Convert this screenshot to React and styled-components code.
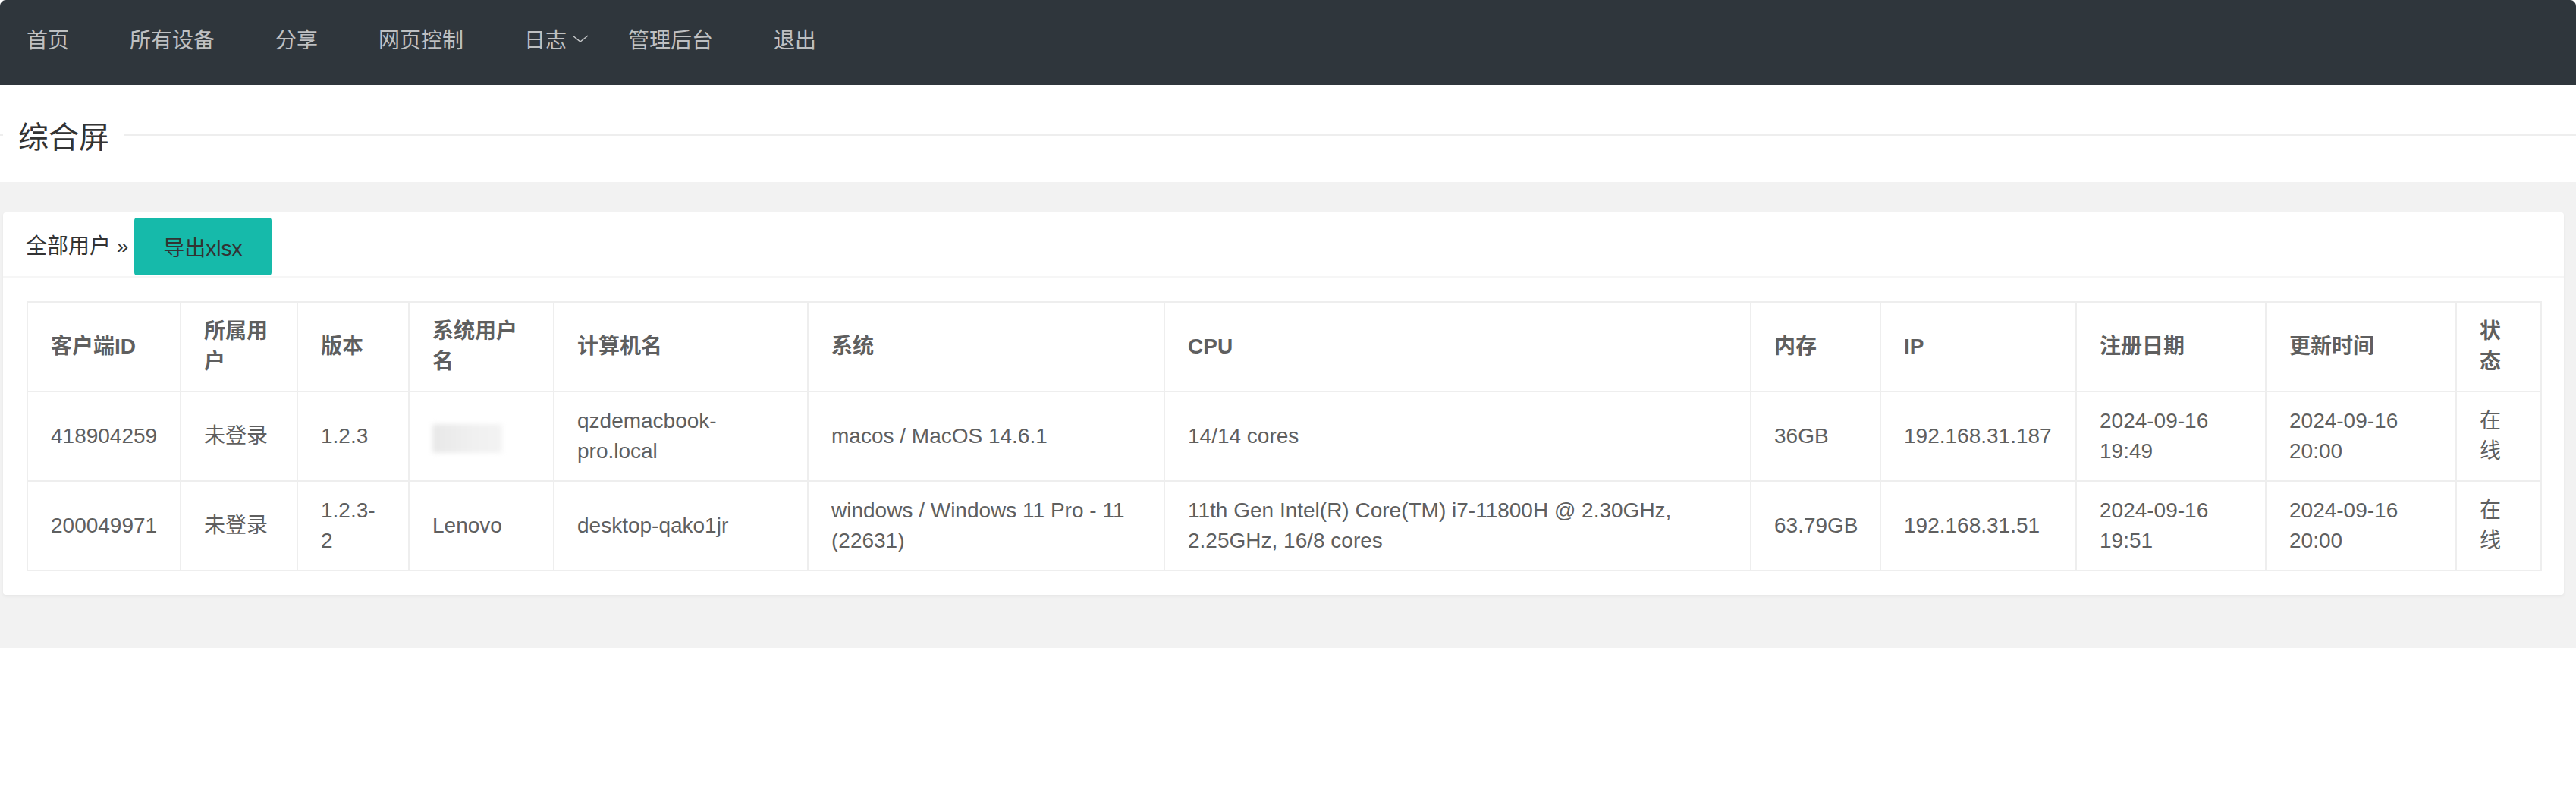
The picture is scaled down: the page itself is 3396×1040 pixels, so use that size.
import React from "react";
import styled, { createGlobalStyle } from "styled-components";

const GlobalStyle = createGlobalStyle`
  html, body { margin: 0; padding: 0; background: #fff; }
  body { font-family: "Liberation Sans", "Noto Sans CJK SC", sans-serif; }
  * { box-sizing: border-box; }
`;

const Nav = styled.nav`
  height: 112px;
  background: #2f363c;
  border-radius: 8px 8px 0 0;
  display: flex;
  align-items: flex-start;
`;

const NavItem = styled.a`
  display: inline-flex;
  align-items: center;
  height: 101px;
  padding: 0 ${(p) => (p.$dropdown ? "11px" : "40px")} 0 40px;
  font-family: "Noto Sans CJK SC", sans-serif;
  font-size: 28px;
  color: rgba(255, 255, 255, 0.7);
  text-decoration: none;
  cursor: pointer;
  &:first-child {
    padding-left: 35px;
  }
`;

const Chevron = styled.svg`
  width: 24px;
  height: 12px;
  margin-left: 6px;
  flex: none;
`;

const TitleSection = styled.section`
  height: 128px;
  padding-top: 38px;
  background: #fff;
`;

const TitleRow = styled.div`
  display: flex;
  align-items: center;
  height: 56px;
  &::before {
    content: "";
    width: 4px;
    height: 2px;
    background: #eee;
  }
  &::after {
    content: "";
    flex: 1;
    height: 2px;
    background: #eee;
  }
`;

const Title = styled.h2`
  margin: 0;
  padding: 0 20px;
  font-family: "Noto Sans CJK SC", sans-serif;
  font-size: 40px;
  font-weight: 400;
  line-height: 56px;
  color: #333;
`;

const Main = styled.main`
  background: #f2f2f2;
  padding: 40px 16px 70px 4px;
`;

const Card = styled.div`
  background: #fff;
  border-radius: 4px;
  box-shadow: 0 2px 4px rgba(0, 0, 0, 0.05);
`;

const CardHeader = styled.div`
  height: 86px;
  padding: 0 30px;
  border-bottom: 2px solid #f6f6f6;
  display: flex;
  align-items: center;
  font-size: 28px;
  color: #333;
`;

const Crumb = styled.span`
  white-space: pre;
`;

const ExportButton = styled.button`
  height: 76px;
  margin: 6px 0 0 8px;
  padding: 0 38px;
  border: none;
  border-radius: 4px;
  background: #16baaa;
  color: #333;
  font-family: "Liberation Sans", "Noto Sans CJK SC", sans-serif;
  font-size: 28px;
  cursor: pointer;
`;

const CardBody = styled.div`
  padding: 31px;
`;

const Table = styled.table`
  width: 100%;
  border-collapse: collapse;
  table-layout: fixed;
  border: 2px solid #eee;
`;

const Col = styled.col`
  width: ${(p) => p.$w}px;
`;

const Th = styled.th`
  padding: 18px 30px;
  border: 2px solid #eee;
  font-size: 28px;
  line-height: 40px;
  font-weight: 700;
  color: #5f5f5f;
  text-align: left;
`;

const Td = styled.td`
  padding: 18px 30px;
  border: 2px solid #eee;
  font-size: 28px;
  line-height: 40px;
  color: #5f5f5f;
  text-align: left;
`;

const BlurBox = styled.span`
  display: inline-block;
  width: 92px;
  height: 38px;
  vertical-align: middle;
  margin-top: 6px;
  background: linear-gradient(90deg, #e8e8e8, #f0f0f0 60%, #f3f3f3);
  filter: blur(3px);
  border-radius: 3px;
`;

const navItems = ["首页", "所有设备", "分享", "网页控制", "日志", "管理后台", "退出"];

const widths = [202, 154, 147, 191, 335, 470, 773, 171, 258, 250, 251, 112];

const headers = [
  "客户端ID",
  "所属用户",
  "版本",
  "系统用户名",
  "计算机名",
  "系统",
  "CPU",
  "内存",
  "IP",
  "注册日期",
  "更新时间",
  "状态",
];

const rows = [
  [
    "418904259",
    "未登录",
    "1.2.3",
    null,
    "qzdemacbook-pro.local",
    "macos / MacOS 14.6.1",
    "14/14 cores",
    "36GB",
    "192.168.31.187",
    "2024-09-16 19:49",
    "2024-09-16 20:00",
    "在线",
  ],
  [
    "200049971",
    "未登录",
    "1.2.3-2",
    "Lenovo",
    "desktop-qako1jr",
    "windows / Windows 11 Pro - 11 (22631)",
    "11th Gen Intel(R) Core(TM) i7-11800H @ 2.30GHz, 2.25GHz, 16/8 cores",
    "63.79GB",
    "192.168.31.51",
    "2024-09-16 19:51",
    "2024-09-16 20:00",
    "在线",
  ],
];

export default function App() {
  return (
    <>
      <GlobalStyle />
      <Nav>
        {navItems.map((item) => (
          <NavItem key={item} $dropdown={item === "日志"}>
            {item}
            {item === "日志" && (
              <Chevron viewBox="0 0 24 12">
                <polyline
                  points="2,2 12,10 22,2"
                  fill="none"
                  stroke="rgba(255,255,255,0.7)"
                  strokeWidth="1.5"
                />
              </Chevron>
            )}
          </NavItem>
        ))}
      </Nav>
      <TitleSection>
        <TitleRow>
          <Title>综合屏</Title>
        </TitleRow>
      </TitleSection>
      <Main>
        <Card>
          <CardHeader>
            <Crumb>全部用户 »</Crumb>
            <ExportButton>导出xlsx</ExportButton>
          </CardHeader>
          <CardBody>
            <Table>
              <colgroup>
                {widths.map((w, i) => (
                  <Col key={i} $w={w} />
                ))}
              </colgroup>
              <thead>
                <tr>
                  {headers.map((h) => (
                    <Th key={h}>{h}</Th>
                  ))}
                </tr>
              </thead>
              <tbody>
                {rows.map((r, ri) => (
                  <tr key={ri}>
                    {r.map((c, ci) => (
                      <Td key={ci}>{c === null ? <BlurBox /> : c}</Td>
                    ))}
                  </tr>
                ))}
              </tbody>
            </Table>
          </CardBody>
        </Card>
      </Main>
    </>
  );
}
